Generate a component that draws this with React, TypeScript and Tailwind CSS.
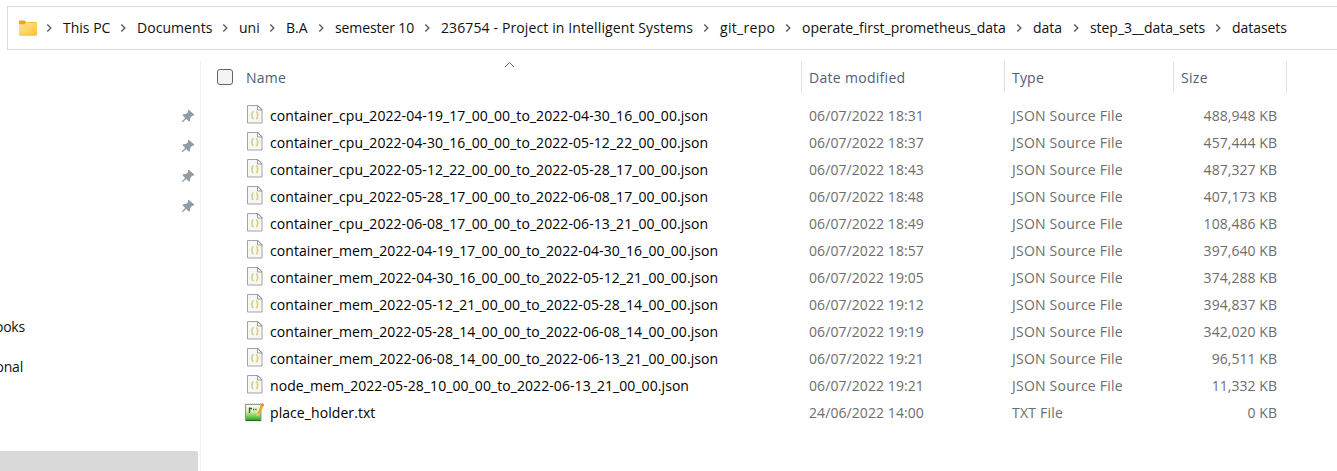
import React from "react";

type Crumb = { label: string; box: string };

const crumbs: Crumb[] = [
  { label: "This PC", box: "w-[47px]" },
  { label: "Documents", box: "w-[75px] tracking-[0.05px]" },
  { label: "uni", box: "w-[20px]" },
  { label: "B.A", box: "w-[22px]" },
  { label: "semester 10", box: "w-[79px] tracking-[-0.1px]" },
  { label: "236754 - Project in Intelligent Systems", box: "w-[252px] tracking-[0.12px]" },
  { label: "git_repo", box: "w-[55px] tracking-[0.3px]" },
  { label: "operate_first_prometheus_data", box: "w-[204px] tracking-[-0.03px]" },
  { label: "data", box: "w-[30px]" },
  { label: "step_3__data_sets", box: "w-[115px] tracking-[-0.05px]" },
  { label: "datasets", box: "w-[55px] tracking-[-0.05px]" },
];

type Row = { name: string; date: string; size: string; txt?: boolean };

const rows: Row[] = [
  { name: "container_cpu_2022-04-19_17_00_00_to_2022-04-30_16_00_00.json", date: "06/07/2022 18:31", size: "488,948 KB" },
  { name: "container_cpu_2022-04-30_16_00_00_to_2022-05-12_22_00_00.json", date: "06/07/2022 18:37", size: "457,444 KB" },
  { name: "container_cpu_2022-05-12_22_00_00_to_2022-05-28_17_00_00.json", date: "06/07/2022 18:43", size: "487,327 KB" },
  { name: "container_cpu_2022-05-28_17_00_00_to_2022-06-08_17_00_00.json", date: "06/07/2022 18:48", size: "407,173 KB" },
  { name: "container_cpu_2022-06-08_17_00_00_to_2022-06-13_21_00_00.json", date: "06/07/2022 18:49", size: "108,486 KB" },
  { name: "container_mem_2022-04-19_17_00_00_to_2022-04-30_16_00_00.json", date: "06/07/2022 18:57", size: "397,640 KB" },
  { name: "container_mem_2022-04-30_16_00_00_to_2022-05-12_21_00_00.json", date: "06/07/2022 19:05", size: "374,288 KB" },
  { name: "container_mem_2022-05-12_21_00_00_to_2022-05-28_14_00_00.json", date: "06/07/2022 19:12", size: "394,837 KB" },
  { name: "container_mem_2022-05-28_14_00_00_to_2022-06-08_14_00_00.json", date: "06/07/2022 19:19", size: "342,020 KB" },
  { name: "container_mem_2022-06-08_14_00_00_to_2022-06-13_21_00_00.json", date: "06/07/2022 19:21", size: "96,511 KB" },
  { name: "node_mem_2022-05-28_10_00_00_to_2022-06-13_21_00_00.json", date: "06/07/2022 19:21", size: "11,332 KB" },
  { name: "place_holder.txt", date: "24/06/2022 14:00", size: "0 KB", txt: true },
];

function FolderIcon() {
  return (
    <svg width="20" height="18" viewBox="0 0 20 18" className="-mr-0.5 shrink-0">
      <defs>
        <linearGradient id="folder" x1="0" y1="0" x2="1" y2="1">
          <stop offset="0" stopColor="#ffe59a" />
          <stop offset="1" stopColor="#fcc432" />
        </linearGradient>
      </defs>
      <path d="M1 2.500a1 1 0 0 1 1-1h4.500L8 3h10a1 1 0 0 1 1 1V8H1z" fill="#e9a51c" />
      <path d="M1 5.200h5.600L8 3.600h10a1 1 0 0 1 1 1v10.900a.8.800 0 0 1-.8.800H1.800a.8.800 0 0 1-.8-.8z" fill="url(#folder)" />
      <path d="M1.200 16.200h17.600" stroke="#e9b030" strokeWidth=".7" />
    </svg>
  );
}

function Chevron() {
  return (
    <span className="flex w-[27px] shrink-0 items-center justify-center">
      <svg width="7" height="10" viewBox="0 0 7 10" fill="none" stroke="#5c5c5c" strokeWidth="1.4">
        <path d="M1.300 1.500 4.800 5 1.300 8.500" />
      </svg>
    </span>
  );
}

function JsonIcon() {
  return (
    <svg width="16" height="19" viewBox="0 0 16 19" fill="none" className="shrink-0">
      <path d="M.5.500h10.500l4 4v13.500H.5z" fill="#f7f7f8" stroke="#a3a3a3" />
      <path d="M10.500.500v4.500H15z" fill="#fff" stroke="#8f8f8f" strokeWidth=".9" />
      <path d="M6.600 6.700Q5.200 6.800 5.200 8.300v1.200l-.5.700.5.700v1.300q0 1.400 1.400 1.500M9 6.700q1.400.100 1.400 1.600v1.200l.5.700-.5.700v1.300q0 1.400-1.400 1.500" stroke="#d5d37c" strokeWidth="1.600" />
    </svg>
  );
}

function TxtIcon() {
  return (
    <svg width="20" height="20" viewBox="0 0 20 20" fill="none" className="shrink-0">
      <defs>
        <linearGradient id="note" x1="0" y1="0" x2="0" y2="1">
          <stop offset="0" stopColor="#fbfdf3" />
          <stop offset=".45" stopColor="#d5efa6" />
          <stop offset="1" stopColor="#27a414" />
        </linearGradient>
      </defs>
      <rect x=".5" y="2.500" width="15.500" height="16" fill="url(#note)" stroke="#8c9a85" />
      <path d="M1 18.500h15" stroke="#24721b" strokeWidth="1.200" />
      <path d="M1 2.300h15" stroke="#a6a6a6" strokeWidth="1.600" strokeDasharray="1 1" />
      <path d="M4.500 5.500v5.500M4 6.500h3M8 7.500h1.200M10.300 7.500h1.200" stroke="#3c5540" strokeWidth="1.300" />
      <path d="m11.500 14.500.8-3.200L16.500 2l2.300 1.300-4.300 9.200z" fill="#f5a332" />
      <path d="m16 2.800 1-1.700 2.300 1.300-1 1.700z" fill="#e87855" />
      <path d="m11.500 14.500.8-3 2 1.100z" fill="#efd7ad" />
    </svg>
  );
}

function Pin() {
  return (
    <svg width="14" height="14" viewBox="0 0 14 14" className="shrink-0">
      <path d="M7.800.700 13.200 5.500 12.600 6.700 11 6.800 9.200 9.200 8.900 12.300 7.800 12.600 5.200 10.100 1.600 13.200.700 12.600 4.100 9 1.600 6.300 2 5.200 5 4.900 7.200 3.100 6.900 1.200z" fill="#919ca5" />
    </svg>
  );
}

export default function App() {
  return (
    <div className="flex h-[471px] w-[1337px] flex-col overflow-hidden bg-white font-['Open_Sans','Noto_Sans',sans-serif] text-[14px] leading-5 whitespace-nowrap text-[#111]">
      <div className="mt-1.5 ml-[7px] flex h-11 shrink-0 items-center border border-r-0 border-[#d9d9d9] pl-[10px]">
        <FolderIcon />
        {crumbs.map((c) => (
          <div key={c.label} className="flex items-center">
            <Chevron />
            <span className={`shrink-0 ${c.box}`}>{c.label}</span>
          </div>
        ))}
      </div>

      <div className="mt-[11px] flex min-h-0 flex-1">
        <aside className="flex w-[200px] shrink-0 flex-col">
          <div className="mt-[40px] flex flex-col items-end pr-[5px]">
            {[0, 1, 2, 3].map((i) => (
              <div key={i} className="flex h-[30px] items-center"><Pin /></div>
            ))}
          </div>
          <div className="mt-[96px] flex h-5 w-[25px] justify-end tracking-[-0.2px]">ooks</div>
          <div className="mt-5 flex h-5 w-[23px] justify-end tracking-[-0.2px]">onal</div>
          <div className="mt-auto h-5 w-[198px] rounded-tr-[2px] bg-[#d9d9d9]" />
        </aside>

        <main className="flex-1 border-l border-[#f2f2f2]">
          <div className="flex h-8 items-center text-[#4c607a]">
            <div className="relative flex h-full w-[600px] items-center pl-4">
              <span className="h-4 w-4 rounded-[3px] border border-[#666] bg-[#f3f3f3]" />
              <span className="ml-[13px] pt-0.5 tracking-[0.2px]">Name</span>
              <svg width="11" height="7" viewBox="0 0 11 7" fill="none" stroke="#666" className="absolute top-0 left-[303px]">
                <path d="M1 6 5.500 1.500 10 6" />
              </svg>
            </div>
            <div className="flex h-full w-[203px] items-center border-l border-[#e2e2e2] pt-0.5 pl-[7px] tracking-[0.3px]">Date modified</div>
            <div className="flex h-full w-[169px] items-center border-l border-[#e2e2e2] pt-0.5 pl-[7px] tracking-[0.2px]">Type</div>
            <div className="flex h-full w-[114px] items-center border-x border-[#e2e2e2] pt-0.5 pl-[7px] tracking-[0.3px]">Size</div>
          </div>

          <div className="mt-[9px]">
            {rows.map((r) => (
              <div key={r.name} className="flex h-[27px] items-center text-[#6d6d6d]">
                <div className="flex w-[608px] items-center pl-[45px]">
                  <span className="mb-[2px] flex w-6 shrink-0">
                    {r.txt ? <span className="-ml-[1px]"><TxtIcon /></span> : <span className="ml-[1px]"><JsonIcon /></span>}
                  </span>
                  <span className="tracking-[0.072px] text-black">{r.name}</span>
                </div>
                <div className="w-[203px] tracking-[0.08px]">{r.date}</div>
                <div className="w-[165px] tracking-[0.22px]">{r.txt ? "TXT File" : "JSON Source File"}</div>
                <div className="w-[100px] text-right tracking-[0.05px]">{r.size}</div>
              </div>
            ))}
          </div>
        </main>
      </div>
    </div>
  );
}
